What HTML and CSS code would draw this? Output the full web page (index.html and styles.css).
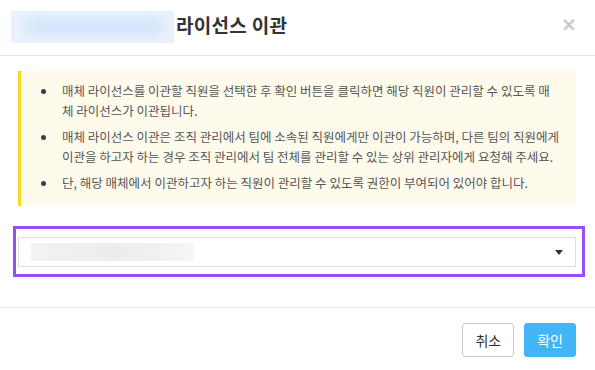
FILE: index.html
```html
<!DOCTYPE html>
<html>
<head>
  <meta charset="utf-8">
  <link rel="stylesheet" href="styles.css">
</head>
<body>
  <div class="modal">
    <div class="modal-header">
      <div class="blur-name"></div>
      <h2 class="modal-title">라이선스 이관</h2>
      <span class="close-btn">&times;</span>
    </div>

    <div class="modal-body">
      <div class="notice">
        <ul>
          <li>매체 라이선스를 이관할 직원을 선택한 후 확인 버튼을 클릭하면 해당 직원이 관리할 수 있도록 매<br>체 라이선스가 이관됩니다.</li>
          <li>매체 라이선스 이관은 조직 관리에서 팀에 소속된 직원에게만 이관이 가능하며, 다른 팀의 직원에게 이관을 하고자 하는 경우 조직 관리에서 팀 전체를 관리할 수 있는 상위 관리자에게 요청해 주세요.</li>
          <li>단, 해당 매체에서 이관하고자 하는 직원이 관리할 수 있도록 권한이 부여되어 있어야 합니다.</li>
        </ul>
      </div>

      <div class="highlight">
        <div class="select-box">
          <div class="blur-option"></div>
          <span class="caret"></span>
        </div>
      </div>
    </div>

    <div class="modal-footer">
      <button class="btn btn-default">취소</button>
      <button class="btn btn-primary">확인</button>
    </div>
  </div>
</body>
</html>
```

FILE: styles.css
```css
body {
  margin: 0;
  background: #fff;
  font-family: "Noto Sans CJK KR", "Noto Sans", sans-serif;
  color: #333;
}

.modal {
  width: 595px;
  height: 370px;
  overflow: hidden;
}

.modal-header {
  display: flex;
  align-items: center;
  height: 56px;
  box-sizing: border-box;
  padding: 0 18px 6px 11px;
  border-bottom: 1px solid #e5e5e5;
}

.blur-name {
  width: 163px;
  height: 32px;
  margin-top: 5px;
  background: #eaf2fd;
  position: relative;
  overflow: hidden;
}

.blur-name::after {
  content: "";
  position: absolute;
  left: 14px;
  right: 10px;
  top: 8px;
  bottom: 8px;
  background: #d2e3fa;
  border-radius: 12px;
  filter: blur(6px);
}

.modal-title {
  margin: 0 0 0 2px;
  font-size: 19px;
  font-weight: 700;
  letter-spacing: 0.3px;
  color: #333;
  flex: 1;
}

.close-btn {
  font-family: "DejaVu Sans", sans-serif;
  font-size: 19px;
  font-weight: 700;
  color: #cacaca;
  line-height: 1;
}

.modal-body {
  padding: 15px 19px 0 18px;
}

.notice {
  background: #fffbec;
  border-left: 3px solid #fcd61e;
  padding: 10px 12px 13px 0;
}

.notice ul {
  margin: 0;
  padding-left: 41px;
  list-style: none;
}

.notice li {
  position: relative;
  font-size: 12.5px;
  line-height: 20px;
  color: #555;
  margin-bottom: 6px;
}

.notice li:last-child {
  margin-bottom: 0;
}

.notice li::before {
  content: "";
  position: absolute;
  left: -21px;
  top: 8px;
  width: 5px;
  height: 5px;
  border-radius: 50%;
  background: #3c3c48;
}

.highlight {
  margin: 20px -9px 0 -5px;
  border: 3px solid #9650f5;
  padding: 8px 6px 7px 2px;
}

.select-box {
  display: flex;
  align-items: center;
  height: 28px;
  border: 1px solid #dedede;
  padding: 0 12px;
}

.blur-option {
  width: 163px;
  height: 18px;
  background: linear-gradient(90deg, #f3f3f3, #ececec 50%, #f6f6f6);
  flex: none;
}

.caret {
  margin-left: auto;
  width: 0;
  height: 0;
  border-left: 4px solid transparent;
  border-right: 4px solid transparent;
  border-top: 5px solid #333;
}

.modal-footer {
  margin-top: 30px;
  border-top: 1px solid #e5e5e5;
  padding: 15px 19px 0 0;
  display: flex;
  justify-content: flex-end;
  gap: 10px;
}

.btn {
  height: 34px;
  padding: 0 12px;
  border-radius: 3px;
  font-family: "Noto Sans CJK KR", sans-serif;
  font-size: 14px;
  cursor: pointer;
}

.btn-default {
  background: #fff;
  border: 1px solid #ccc;
  color: #333;
}

.btn-primary {
  background: #42b5f7;
  border: 1px solid #42b5f7;
  color: #fff;
}
```
